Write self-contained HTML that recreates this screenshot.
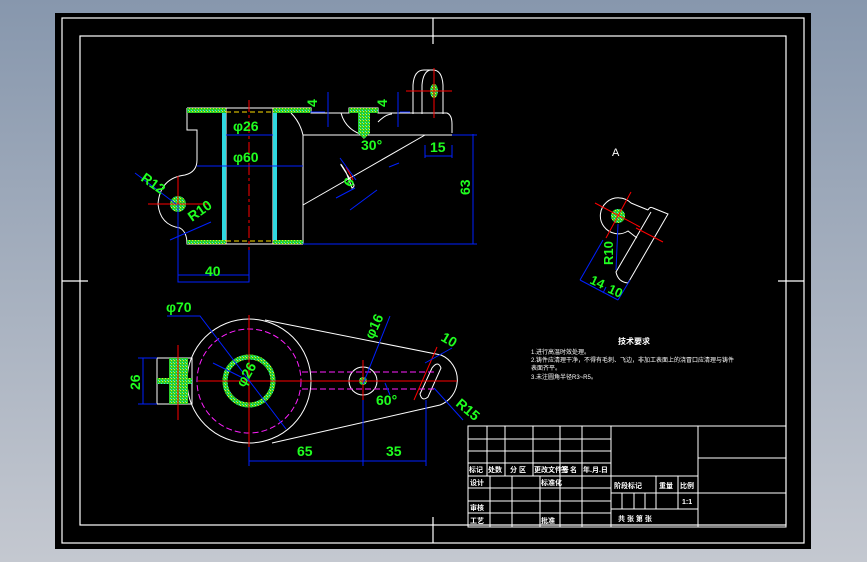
<!DOCTYPE html>
<html><head><meta charset="utf-8"><style>
html,body{margin:0;padding:0;width:867px;height:562px;overflow:hidden;background:linear-gradient(#8797ad,#c4c8d0);}
svg{display:block}
text{font-family:"Liberation Sans","Noto Sans CJK SC",sans-serif;}
</style></head><body>
<svg width="867" height="562" viewBox="0 0 867 562">
<defs>
<pattern id="h" width="3" height="3" patternUnits="userSpaceOnUse"><rect width="3" height="3" fill="#2ad02a"/><rect width="1" height="1" fill="#e8e820"/><rect x="2" y="2" width="1" height="1" fill="#40e0e0"/></pattern>
</defs>
<rect x="55" y="13" width="756" height="536" fill="#000"/>
<g fill="none" stroke="#fff" stroke-width="1.2">
<rect x="62" y="18" width="742" height="525"/>
<rect x="80" y="36" width="706" height="489"/>
<path d="M433 18V44M433 517V543M62 281H88M778 281H804"/>
</g>
<!-- TOP VIEW -->
<g fill="none" stroke="#fff" stroke-width="1">
<path d="M187 108V130H197V160Q197 172 185 175Q160 178 158 204Q160 225 180 228Q187 232 187 244H303V135"/>
<path d="M226 108V244M273 108V244M187 108H311V113H349V108H378V113H447Q452 115 452 124V133M303 135H452"/>
<path d="M291 113Q300 122 303 135"/>
<path d="M303 205L425 135"/>
<path d="M341 165L352 182Q356 186 352 188L346 172Q340 162 341 165Z"/>
<path d="M413 114V85Q414 70 424 70H433Q442 70 443 85V114M422 114V85Q423 72 430 70"/>
<path d="M341 113Q345 128 360 134M378 122Q386 114 392 114"/>
</g>
<rect x="187" y="108" width="39" height="5" fill="url(#h)"/>
<rect x="273" y="108" width="38" height="5" fill="url(#h)"/>
<rect x="349" y="108" width="29" height="5" fill="url(#h)"/>
<path d="M358 113H370V133L364 139L358 133Z" fill="url(#h)"/>
<rect x="187" y="240" width="39" height="4" fill="url(#h)"/>
<rect x="273" y="240" width="30" height="4" fill="url(#h)"/>
<rect x="222" y="113" width="4" height="127" fill="#30d8e0"/>
<rect x="273" y="113" width="4" height="127" fill="#30d8e0"/>
<circle cx="178" cy="204" r="8" fill="url(#h)"/>
<ellipse cx="434" cy="91" rx="4" ry="7" fill="url(#h)"/>
<g stroke="#ffe000" stroke-dasharray="5 3"><path d="M226 112H273M226 241H273"/></g>
<g stroke="#f00" fill="none"><path d="M249 100V253" stroke-dasharray="12 3 3 3"/><path d="M148 204H208M178 176V232M406 91H452M434 68V118M346 167L353 180"/></g>
<g stroke="#0020ff" fill="none" stroke-width="1">
<path d="M197 166H303M226 135H273M178 204V282H249V250M178 275H249M303 244H477M473 134V244M452 135H477M425 145V158M452 145V158M425 156H452M328 92V127M398 92V127M310 112H325M400 112H410M135 173L176 204M170 240L211 222M350 210L377 190M336 198L355 188M389 167L399 163M340 158L356 180"/>
</g>
<g fill="#20ff20" font-size="14" font-weight="bold">
<text x="233" y="131">φ26</text><text x="233" y="162">φ60</text>
<text x="205" y="276">40</text><text x="430" y="152">15</text>
<text x="361" y="150">30°</text>
<text transform="translate(470,195) rotate(-90)">63</text>
<text transform="translate(317,107) rotate(-90)">4</text><text transform="translate(387,107) rotate(-90)">4</text>
<text transform="translate(140,180) rotate(35)">R12</text>
<text transform="translate(192,222) rotate(-35)">R10</text>
<text transform="translate(351,188) rotate(-60)">6</text>
</g>
<!-- BOTTOM VIEW -->
<g fill="none" stroke="#fff" stroke-width="1">
<circle cx="249" cy="381" r="62"/>
<circle cx="363" cy="381" r="14"/>
<path d="M265 320L441 355A27 27 0 0 1 440 405L272 443"/>
<rect x="157" y="358" width="35" height="46"/>
<path d="M420 394L432 368Q438 360 441 368L428 397Q422 402 420 394Z"/>
</g>
<circle cx="249" cy="381" r="24" fill="none" stroke="url(#h)" stroke-width="5"/>
<rect x="169" y="358" width="19" height="46" fill="url(#h)"/>
<rect x="157" y="378" width="35" height="6" fill="url(#h)"/>
<circle cx="363" cy="381" r="4" fill="url(#h)"/>
<g stroke="#ff20ff" fill="none" stroke-dasharray="6 3"><circle cx="249" cy="381" r="52"/><path d="M302 372H435M302 389H435"/></g>
<g stroke="#f00" fill="none"><path d="M198 381H457M249 315V447M363 360V400M178 345V420M414 400L437 347"/></g>
<g stroke="#0020ff" fill="none">
<path d="M143 358V404M138 358H157M138 404H157M167 316H200L286 429M249 381L213 363M249 447V466M363 400V466M426 400V466M249 461H426M363 384L390 316M425 363L452 348M434 388L463 420M385 383L390 395"/>
</g>
<g fill="#20ff20" font-size="14" font-weight="bold">
<text x="166" y="312">φ70</text><text x="297" y="456">65</text><text x="386" y="456">35</text>
<text x="376" y="405">60°</text>
<text transform="translate(140,390) rotate(-90)">26</text>
<text transform="translate(373,340) rotate(-65)">φ16</text>
<text transform="translate(440,340) rotate(30)">10</text>
<text transform="translate(455,405) rotate(40)">R15</text>
<text transform="translate(244,388) rotate(-60)">φ26</text>
</g>
<!-- DETAIL A -->
<text x="612" y="156" fill="#fff" font-size="11">A</text>
<g fill="none" stroke="#fff"><path d="M631 203A18 18 0 1 0 628 231L637 238M631 203L648 210M648 210Q650 206 653 208L668 214L628 283M651 212L616 272Q618 282 628 283"/></g>
<circle cx="618" cy="216" r="7" fill="url(#h)"/>
<g stroke="#f00"><path d="M595 203L640 227M631 192L606 238M636 228L663 242"/></g>
<g stroke="#0020ff" fill="none"><path d="M618 224L616 270M603 240L580 280M580 280L618 300M618 300L630 280M603 293L606 287"/></g>
<g fill="#20ff20" font-size="13" font-weight="bold">
<text transform="translate(613,265) rotate(-90)">R10</text>
<text transform="translate(589,283) rotate(25)">14</text>
<text transform="translate(607,292) rotate(25)">10</text>
</g>
<!-- NOTES -->
<g fill="#fff" font-size="6"><text x="618" y="344" font-size="8" font-weight="bold">技术要求</text>
<text x="531" y="354">1.进行高温时效处理。</text>
<text x="531" y="362">2.铸件应清理干净，不得有毛刺、飞边，非加工表面上的浇冒口应清理与铸件</text>
<text x="531" y="370">表面齐平。</text>
<text x="531" y="379">3.未注圆角半径R3~R5。</text></g>
<!-- TITLE BLOCK -->
<g fill="none" stroke="#fff" stroke-width="1">
<rect x="468" y="426" width="318" height="101"/>
<path d="M468 439H611M468 451H611M468 463H611M468 476H698M468 488H611M468 501H611M468 513H611M611 493H698M611 509H698M698 458H786M698 493H786"/>
<path d="M487 426V476M505 426V476M533 426V476M560 426V527M582 426V527M611 426V527M698 426V527M490 476V527M512 476V527M540 476V527M656 476V509M678 476V509M622 493V509M634 493V509M645 493V509"/>
</g>
<g fill="#fff" font-size="7" font-weight="bold">
<text x="469" y="472">标记</text><text x="488" y="472">处数</text><text x="510" y="472">分 区</text><text x="534" y="472">更改文件号</text><text x="561" y="472">签 名</text><text x="583" y="472">年.月.日</text>
<text x="470" y="485">设计</text><text x="541" y="485">标准化</text>
<text x="614" y="488">阶段标记</text><text x="659" y="488">重量</text><text x="680" y="488">比例</text>
<text x="682" y="504">1:1</text>
<text x="470" y="510">审核</text><text x="470" y="523">工艺</text><text x="541" y="523">批准</text>
<text x="618" y="521">共 张 第 张</text>
</g>
</svg>
</body></html>
